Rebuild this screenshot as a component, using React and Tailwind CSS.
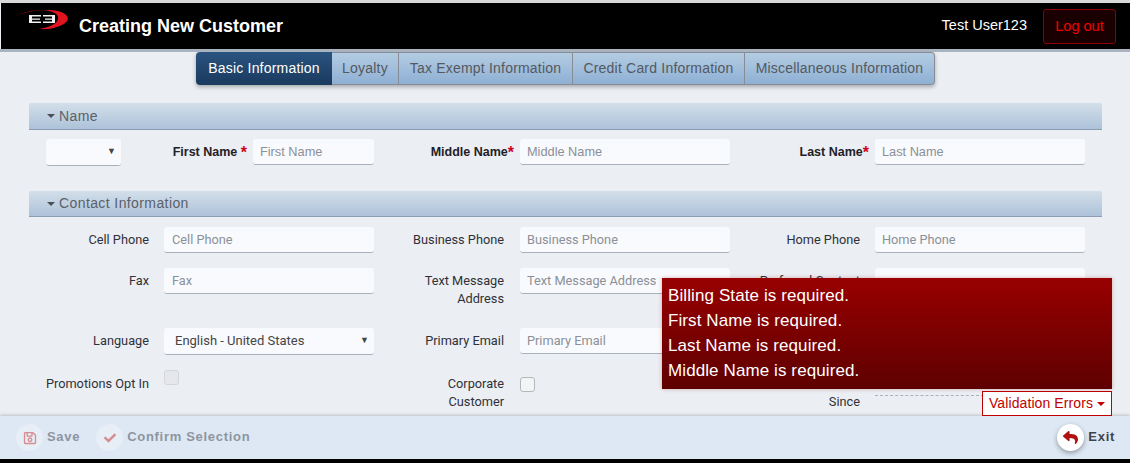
import { FaCheck, FaRegSave, FaReply } from "react-icons/fa";

const tabs = [
  { name: "Basic Information", width: "w-[136px]", active: true },
  { name: "Loyalty", width: "w-[67px]" },
  { name: "Tax Exempt Information", width: "w-[174px]" },
  { name: "Credit Card Information", width: "w-[172px]" },
  { name: "Miscellaneous Information", width: "w-[190px]" },
];

const errors = [
  "Billing State is required.",
  "First Name is required.",
  "Last Name is required.",
  "Middle Name is required.",
];

function Logo() {
  return (
    <svg width="54" height="20" viewBox="0 0 54 20" className="mb-[12px] shrink-0">
      <path d="M0 6 C8 2 18 0 28 0 C24 0.6 10 2 0 6Z" fill="#6d0a12" />
      <path d="M28 0 C38 -0.5 46 1 50 4 C55 8 53 12 47 15 C40 18.5 32 19.6 24 19 C34 17.5 42 14 43 9 C44 5 40 2 34 1Z" fill="#e0141f" />
      <path d="M14 5 H26 V6.4 H17 V8.4 H25 V9.8 H17 V11.6 H26 V13 H14Z" fill="#f2f2f2" />
      <path d="M28 5 H40 V13 H28 V11.6 H37 V9.8 H30 V8.4 H37 V6.4 H28Z" fill="#f2f2f2" />
    </svg>
  );
}

function Label({ children, className = "pt-[4px]" }) {
  return (
    <label className={`text-right text-[12.75px] leading-[18px] text-[#2f3138] ${className}`}>
      {children}
    </label>
  );
}

function BoldLabel({ children, className = "" }) {
  return (
    <label className={`pt-[4px] text-right text-[12.5px] font-bold leading-[18px] text-[#1f2127] ${className}`}>
      {children}
      <span className="align-[-2px] text-[16px] leading-none text-[#d0021b]">*</span>
    </label>
  );
}

function TextInput({ placeholder, className = "px-2" }) {
  return (
    <input
      placeholder={placeholder}
      className={`h-[26px] w-full rounded-[3px] border-b border-[#a9b1bd] bg-[#f9fafd] text-[12.75px] text-[#444] outline-none placeholder:text-[#8b9097] ${className}`}
    />
  );
}

function SelectBox({ value, className = "" }) {
  return (
    <div className={`flex h-[27px] items-center justify-between rounded-[3px] border-b border-[#a9b1bd] bg-[#f9fafd] pl-[11px] pr-[5px] text-[13px] text-[#444] ${className}`}>
      <span>{value}</span>
      <span className="text-[9px] text-[#444]">▼</span>
    </div>
  );
}

function SectionBar({ title, className = "h-[26px]" }) {
  return (
    <div className={`flex items-center gap-[4px] rounded-t-[2px] border-b border-[#8b9db3] bg-gradient-to-b from-[#d3dfea] to-[#adc2d9] pl-[18px] text-[14px] tracking-[0.4px] text-[#5b6068] ${className}`}>
      <span className="h-0 w-0 border-x-[4px] border-t-[4px] border-x-transparent border-t-[#4a4f57]" />
      {title}
    </div>
  );
}

function FooterAction({ icon, label, disabled }) {
  return (
    <div className={`flex items-center gap-[4px] ${disabled ? "opacity-50" : ""}`}>
      <span className={`flex h-[27px] w-[27px] items-center justify-center rounded-full ${disabled ? "bg-[#f2f5f9]" : "bg-white shadow-[0_2px_5px_rgba(0,0,0,0.35)]"}`}>
        {icon}
      </span>
      <span className="mb-px text-[13px] font-bold tracking-[0.7px] text-[#3f434b]">{label}</span>
    </div>
  );
}

export default function App() {
  return (
    <div className="relative flex h-[463px] w-[1130px] flex-col overflow-hidden bg-[#ebeef3] font-['Liberation_Sans',Arial,sans-serif]">
      <div className="h-[3px] bg-[#d8d8d8]" />
      <header className="flex h-[46px] items-center justify-between border-l border-[#ebeef3] bg-black pl-[14px] pr-[14px]">
        <div className="flex items-center gap-[10px]">
          <Logo />
          <h1 className="text-[18px] font-bold text-white">Creating New Customer</h1>
        </div>
        <div className="flex items-center gap-[16px]">
          <span className="text-[14.5px] text-white">Test User123</span>
          <button className="h-[35px] w-[73px] rounded-[3px] border border-[#8f0000] bg-[#1a0000] pt-px text-[14.5px] text-[#f00000]">
            Log out
          </button>
        </div>
      </header>
      <div className="h-[3px] bg-[#a9b3bf]" />

      <main className="min-h-0 flex-1 overflow-hidden">
        <div className="flex justify-center">
          <div className="ml-[1px] flex h-[33px] rounded-[4px] shadow-[0_2px_4px_rgba(0,0,0,0.3)]">
            {tabs.map((t) => (
              <div
                key={t.name}
                className={[
                  "flex items-center justify-center text-[14px] tracking-[0.2px] first:rounded-l-[4px] last:rounded-r-[4px]",
                  t.width,
                  t.active
                    ? "bg-gradient-to-b from-[#2a5480] to-[#1a3a5e] text-white"
                    : "border-y border-r border-[#868d96] bg-gradient-to-b from-[#b3cce2] to-[#8fb0d4] text-[#54595f]",
                ].join(" ")}
              >
                {t.name}
              </div>
            ))}
          </div>
        </div>

        <section className="ml-[29px] mt-[18px] w-[1073px]">
          <SectionBar title="Name" className="h-[27px]" />
          <div className="ml-[17px] mt-[9px] grid grid-cols-[75px_122px_121px_136px_210px_135px_210px] items-start gap-x-[5px]">
            <SelectBox value="" />
            <BoldLabel className="pr-[1px]">First Name </BoldLabel>
            <TextInput placeholder="First Name" className="px-[7px]" />
            <BoldLabel className="pr-px">Middle Name</BoldLabel>
            <TextInput placeholder="Middle Name" className="px-[7px]" />
            <BoldLabel className="pr-px">Last Name</BoldLabel>
            <TextInput placeholder="Last Name" className="px-[7px]" />
          </div>
        </section>

        <section className="ml-[29px] mt-[25px] w-[1073px]">
          <SectionBar title="Contact Information" />
          <div className="mt-[10px] grid grid-cols-[120px_210px_116px_210px_115px_210px] gap-x-[15px] gap-y-[15px] font-['Roboto',sans-serif]">
            <Label>Cell Phone</Label>
            <TextInput placeholder="Cell Phone" />
            <Label className="pr-px pt-[4px]">Business Phone</Label>
            <TextInput placeholder="Business Phone" className="px-[7px]" />
            <Label>Home Phone</Label>
            <TextInput placeholder="Home Phone" className="px-[7px]" />

            <Label>Fax</Label>
            <TextInput placeholder="Fax" />
            <Label className="h-[45px] pr-px pt-[4px]">Text Message Address</Label>
            <TextInput placeholder="Text Message Address" className="px-[7px]" />
            <Label>Preferred Contact</Label>
            <TextInput />

            <Label>Language</Label>
            <SelectBox value="English - United States" />
            <Label className="pr-px pt-[4px]">Primary Email</Label>
            <TextInput placeholder="Primary Email" className="px-[7px]" />
            <span />
            <TextInput />

            <Label className="pt-[5px]">Promotions Opt In</Label>
            <div>
              <span className="block h-[15px] w-[15px] rounded-[3px] border border-[#d3d5d9] bg-[#e6e7ea]" />
            </div>
            <Label className="pr-px pt-[5px]">
              Corporate
              <br />
              Customer
            </Label>
            <div className="pt-[7px]">
              <span className="block h-[15px] w-[15px] rounded-[3px] border border-[#b4b7bc] bg-[#f3f4f6]" />
            </div>
            <Label className="pt-[23px]">Since</Label>
            <div className="h-[26px] border-b border-dashed border-[#a9b1bd]" />
          </div>
        </section>
      </main>

      <footer className="z-10 flex h-[43px] items-center justify-between bg-[#dde8f4] pl-[16px] pr-[15px] shadow-[0_-1px_3px_rgba(0,0,0,0.2)]">
        <div className="flex items-center gap-[16px]">
          <FooterAction disabled label="Save" icon={<FaRegSave className="text-[14px] text-[#c33]" />} />
          <FooterAction disabled label="Confirm Selection" icon={<FaCheck className="text-[12px] text-[#c33]" />} />
        </div>
        <FooterAction label="Exit" icon={<FaReply className="text-[15px] text-[#b01010]" />} />
      </footer>
      <div className="h-[4px] bg-black" />

      {/* validation popup sits on top of the form */}
      <div className="absolute left-[662px] top-[278px] z-20 h-[111px] w-[450px] bg-gradient-to-b from-[#990000] to-[#5e0000] pl-[6px] pt-[5px] text-[17px] leading-[25px] tracking-[0.1px] text-white shadow-[0_0_4px_rgba(150,0,0,0.3)]">
        {errors.map((e) => (
          <div key={e}>{e}</div>
        ))}
      </div>
      <button className="absolute left-[982px] top-[391px] z-20 flex h-[25px] w-[130px] items-center justify-center gap-[4px] border border-[#c00000] bg-white text-[14px] tracking-[0.1px] text-[#c00000]">
        Validation Errors
        <span className="h-0 w-0 border-x-[4px] border-t-[4px] border-x-transparent border-t-[#c00000]" />
      </button>
    </div>
  );
}
